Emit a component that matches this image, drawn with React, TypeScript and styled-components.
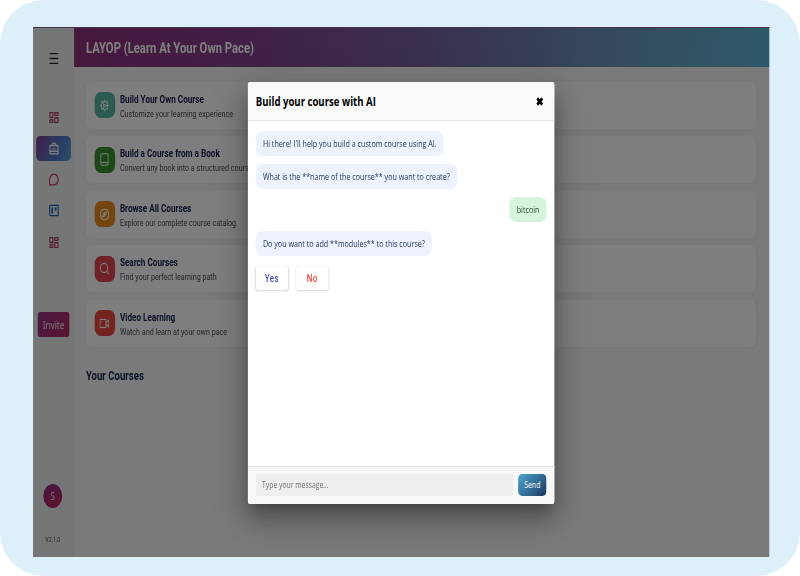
import React from 'react';
import styled, { createGlobalStyle } from 'styled-components';

const GlobalStyle = createGlobalStyle`
  * { box-sizing: border-box; }
  body { margin: 0; background: #fff; }
  button, input { font: inherit; border: 0; margin: 0; }
`;

const Frame = styled.div`
  width: 800px;
  height: 576px;
  padding: 27px 0 0 33px;
  overflow: hidden;
  border-radius: 44px;
  background: #ddf0fa;
`;

/* The window is laid out at its natural width and narrowed horizontally. */
const Screen = styled.div`
  position: relative;
  display: grid;
  grid-template-columns: 52px 1fr;
  width: 932.3px;
  height: 530px;
  border-top: 1.5px solid #8a5c8e;
  transform: scaleX(0.79);
  transform-origin: 0 0;
  background: #f4f4f7;
  font-family: Roboto, sans-serif;
  white-space: nowrap;
`;

const Sidebar = styled.aside`
  display: flex;
  flex-direction: column;
  align-items: center;
  background: #ebecec;
`;

const MenuButton = styled.div`
  display: flex;
  margin: 24px 0 39.5px;
  color: #222;
`;

const NavItem = styled.div<{ $active?: boolean; $color?: string }>`
  display: flex;
  align-items: center;
  justify-content: center;
  width: 44px;
  height: 25px;
  margin-bottom: 6.3px;
  border-radius: 5px;
  color: ${p => p.$color ?? '#a8386c'};
  background: ${p => (p.$active ? 'linear-gradient(115deg, #823c96, #4f78c4 60%, #559fd6)' : 'none')};
`;

const Invite = styled.button`
  width: 40px;
  height: 25px;
  margin-top: 51.5px;
  padding: 0;
  border-radius: 3px;
  background: linear-gradient(135deg, #94388a, #b62860);
  color: #f3e6ee;
  font: 400 10.4px 'Noto Sans', sans-serif;
`;

const Avatar = styled.div`
  width: 24px;
  height: 24px;
  margin: 147px 2px 0 0;
  border-radius: 50%;
  background: linear-gradient(160deg, #8e2f86, #c22458);
  color: #f3e6ee;
  font: 400 10px/24px 'Noto Sans', sans-serif;
  text-align: center;
`;

const Version = styled.div`
  margin: 27px 2px 0 0;
  color: #444;
  font-size: 6.6px;
  line-height: 10px;
`;

const TopBar = styled.header`
  height: 38.5px;
  padding-left: 15px;
  background: linear-gradient(100deg, #8e2f7a, #82408e 25%, #74609e 50%, #6c8cb6 72%, #5cb4d2);
  color: #fff;
  font-size: 14.3px;
  font-weight: 700;
  line-height: 40.5px;
`;

const CourseMenu = styled.div`
  display: grid;
  gap: 7.6px;
  padding: 15px 17px 0 15px;
`;

const Card = styled.div`
  display: flex;
  align-items: center;
  gap: 6.5px;
  height: 47px;
  padding: 0 10.5px;
  border-radius: 7px;
  background: #fcfcfc;
  box-shadow: 0 2px 7px rgba(0, 0, 0, 0.03);
`;

const CardIcon = styled.div<{ $color: string }>`
  display: flex;
  align-items: center;
  justify-content: center;
  width: 26px;
  height: 26px;
  border-radius: 8px;
  background: ${p => p.$color};
  color: #fff;
`;

const CardLabel = styled.div`
  padding-top: 3px;
`;

const CardTitle = styled.div`
  color: #141b4d;
  font-size: 10.33px;
  font-weight: 700;
  line-height: 14px;
`;

const CardText = styled.div`
  color: #4a4a4a;
  font-size: 9.06px;
  line-height: 14px;
`;

const SectionTitle = styled.h2`
  margin: 20px 0 0 15px;
  color: #141b4d;
  font-size: 12.15px;
  font-weight: 700;
  line-height: 18px;
`;

const Overlay = styled.div`
  position: absolute;
  inset: -1.5px 0 0;
  padding: 55px 0 0 272px;
  overflow: hidden;
  background: rgba(0, 0, 0, 0.5);
`;

const Dialog = styled.section`
  display: grid;
  grid-template-rows: 39px 1fr 38.5px;
  width: 388px;
  height: 422.5px;
  border-radius: 3px;
  overflow: hidden;
  background: #fff;
  box-shadow: 0 9px 14px -6px rgba(0, 0, 0, 0.28), 0 17px 28px 2px rgba(0, 0, 0, 0.2), 0 6px 42px 6px rgba(0, 0, 0, 0.14);
  font-family: 'Open Sans', 'Noto Sans', sans-serif;
`;

const DialogHeader = styled.header`
  display: flex;
  align-items: center;
  justify-content: space-between;
  padding: 1px 13px 0 10px;
  border-bottom: 1px solid #e4e8e8;
  background: #f9fbfb;
  color: #000;
  font-size: 12.15px;
  font-weight: 700;
`;

const Chat = styled.div`
  display: flex;
  flex-direction: column;
  align-items: flex-start;
  gap: 8.2px;
  padding: 10.5px 10px;
`;

const Bubble = styled.div<{ $own?: boolean }>`
  align-self: ${p => (p.$own ? 'flex-end' : 'flex-start')};
  height: 25px;
  padding: 0 9px;
  border-radius: 8px;
  background: ${p => (p.$own ? '#d4f5dc' : '#eef2ff')};
  color: ${p => (p.$own ? '#2d4a3e' : '#22365c')};
  font-size: 9.07px;
  line-height: 25.5px;
`;

const Choices = styled.div`
  display: flex;
  gap: 10px;
  margin-top: 3px;
`;

const Choice = styled.button<{ $color: string }>`
  width: 41px;
  height: 23px;
  padding: 0;
  border-radius: 3px;
  background: #fff;
  box-shadow: 0 0.5px 2px rgba(0, 0, 0, 0.17);
  color: ${p => p.$color};
  font: 500 10px Roboto, sans-serif;
  letter-spacing: 0.6px;
`;

const Composer = styled.footer`
  display: flex;
  align-items: center;
  gap: 6px;
  padding: 0 10px;
  border-top: 1px solid #e2e2e2;
  background: #f9f9f9;
`;

const MessageInput = styled.input`
  flex: 1;
  min-width: 0;
  height: 22px;
  padding: 0 8px;
  border-radius: 3px;
  background: #efefef;
  font-size: 8.65px;
  &::placeholder { color: #707070; opacity: 1; }
`;

const SendButton = styled.button`
  width: 36px;
  height: 22px;
  padding: 0;
  border-radius: 5px;
  background: linear-gradient(135deg, #4ba3cb, #35709a 50%, #1d3558);
  color: #fff;
  font-size: 8.8px;
  font-weight: 500;
`;

type IconName = 'menu' | 'dashboard' | 'bag' | 'chat' | 'board' | 'gear' | 'book' | 'compass' | 'search' | 'video' | 'close';

const drawings: Record<IconName, React.ReactNode> = {
  menu: <path d="M2 3h20M2 12h20M2 21h20" />,
  dashboard: <path d="M2.5 3h7v9h-7zM14 3h7.5v5H14zM14 12.5h7.5V21H14zM2.5 16.5h7V21h-7z" />,
  bag: <><rect x="2.5" y="6.5" width="19" height="15.5" rx="1" /><path d="M8 7V4l2-2h4l2 2v3M3 17h18M8 14v-2M12 14v-3M16 14v-2" /></>,
  chat: <path d="M2 22V12a10 10 0 1 1 10 10z" />,
  board: <><rect x="2" y="2.5" width="20" height="19" rx="1" /><path d="M8 6.5v11M16 6.5v6" strokeWidth="4" /></>,
  gear: <><circle cx="12" cy="12" r="7.5" /><circle cx="12" cy="12" r="2" /><path d="M12 1v4M12 19v4M1 12h4M19 12h4M4.2 4.2 7 7M17 17l2.8 2.8M4.2 19.8 7 17M17 7l2.8-2.8M11 10.5 8 6M14 12h5M11 13.5 8 18" /></>,
  book: <><rect x="3.5" y="1.5" width="17" height="21" rx="2" /><path d="M4 17.5h16" /></>,
  compass: <><circle cx="12" cy="12" r="10" /><path d="m17 7-3 7-7 3 3-7z" /><circle cx="12" cy="12" r="1" /></>,
  search: <><circle cx="11" cy="11" r="8.5" /><path d="m17.5 17.5 5 5" /></>,
  video: <><rect x="1.5" y="4.5" width="14" height="15" /><path d="m15.5 10 6.5-4v12l-6.5-4M5 8.5h2" /></>,
  close: <path d="m5 5 14 14M19 5 5 19" strokeWidth="7" />,
};

const Glyph = styled.svg`
  display: block;
  fill: none;
  stroke: currentColor;
`;

function Icon({ name, size, weight = 2 }: { name: IconName; size: number; weight?: number }) {
  return (
    <Glyph width={size} height={size} viewBox="0 0 24 24" strokeWidth={weight}>
      {drawings[name]}
    </Glyph>
  );
}

const nav: { icon: IconName; color?: string; active?: boolean }[] = [
  { icon: 'dashboard' },
  { icon: 'bag', color: '#fff', active: true },
  { icon: 'chat', color: '#c83054' },
  { icon: 'board', color: '#1c64b4' },
  { icon: 'dashboard' },
];

const cards: { icon: IconName; color: string; title: string; text: string }[] = [
  { icon: 'gear', color: '#56b4a0', title: 'Build Your Own Course', text: 'Customize your learning experience' },
  { icon: 'book', color: '#38902c', title: 'Build a Course from a Book', text: 'Convert any book into a structured course' },
  { icon: 'compass', color: '#e98a1c', title: 'Browse All Courses', text: 'Explore our complete course catalog' },
  { icon: 'search', color: '#e0464c', title: 'Search Courses', text: 'Find your perfect learning path' },
  { icon: 'video', color: '#e8463f', title: 'Video Learning', text: 'Watch and learn at your own pace' },
];

export default function App() {
  return (
    <Frame>
      <GlobalStyle />
      <Screen>
        <Sidebar>
          <MenuButton><Icon name="menu" size={13} weight={2.4} /></MenuButton>
          {nav.map((item, i) => (
            <NavItem key={i} $active={item.active} $color={item.color}>
              <Icon name={item.icon} size={13} weight={2.5} />
            </NavItem>
          ))}
          <Invite>Invite</Invite>
          <Avatar>S</Avatar>
          <Version>V2.1.0</Version>
        </Sidebar>
        <main>
          <TopBar>LAYOP (Learn At Your Own Pace)</TopBar>
          <CourseMenu>
            {cards.map(card => (
              <Card key={card.title}>
                <CardIcon $color={card.color}><Icon name={card.icon} size={13} weight={2} /></CardIcon>
                <CardLabel>
                  <CardTitle>{card.title}</CardTitle>
                  <CardText>{card.text}</CardText>
                </CardLabel>
              </Card>
            ))}
          </CourseMenu>
          <SectionTitle>Your Courses</SectionTitle>
        </main>
        <Overlay>
          <Dialog>
            <DialogHeader>
              Build your course with AI
              <Icon name="close" size={11} />
            </DialogHeader>
            <Chat>
              <Bubble>Hi there! I'll help you build a custom course using AI.</Bubble>
              <Bubble>What is the **name of the course** you want to create?</Bubble>
              <Bubble $own>bitcoin</Bubble>
              <Bubble>Do you want to add **modules** to this course?</Bubble>
              <Choices>
                <Choice $color="#3f51b5">Yes</Choice>
                <Choice $color="#f44336">No</Choice>
              </Choices>
            </Chat>
            <Composer>
              <MessageInput placeholder="Type your message..." />
              <SendButton>Send</SendButton>
            </Composer>
          </Dialog>
        </Overlay>
      </Screen>
    </Frame>
  );
}
